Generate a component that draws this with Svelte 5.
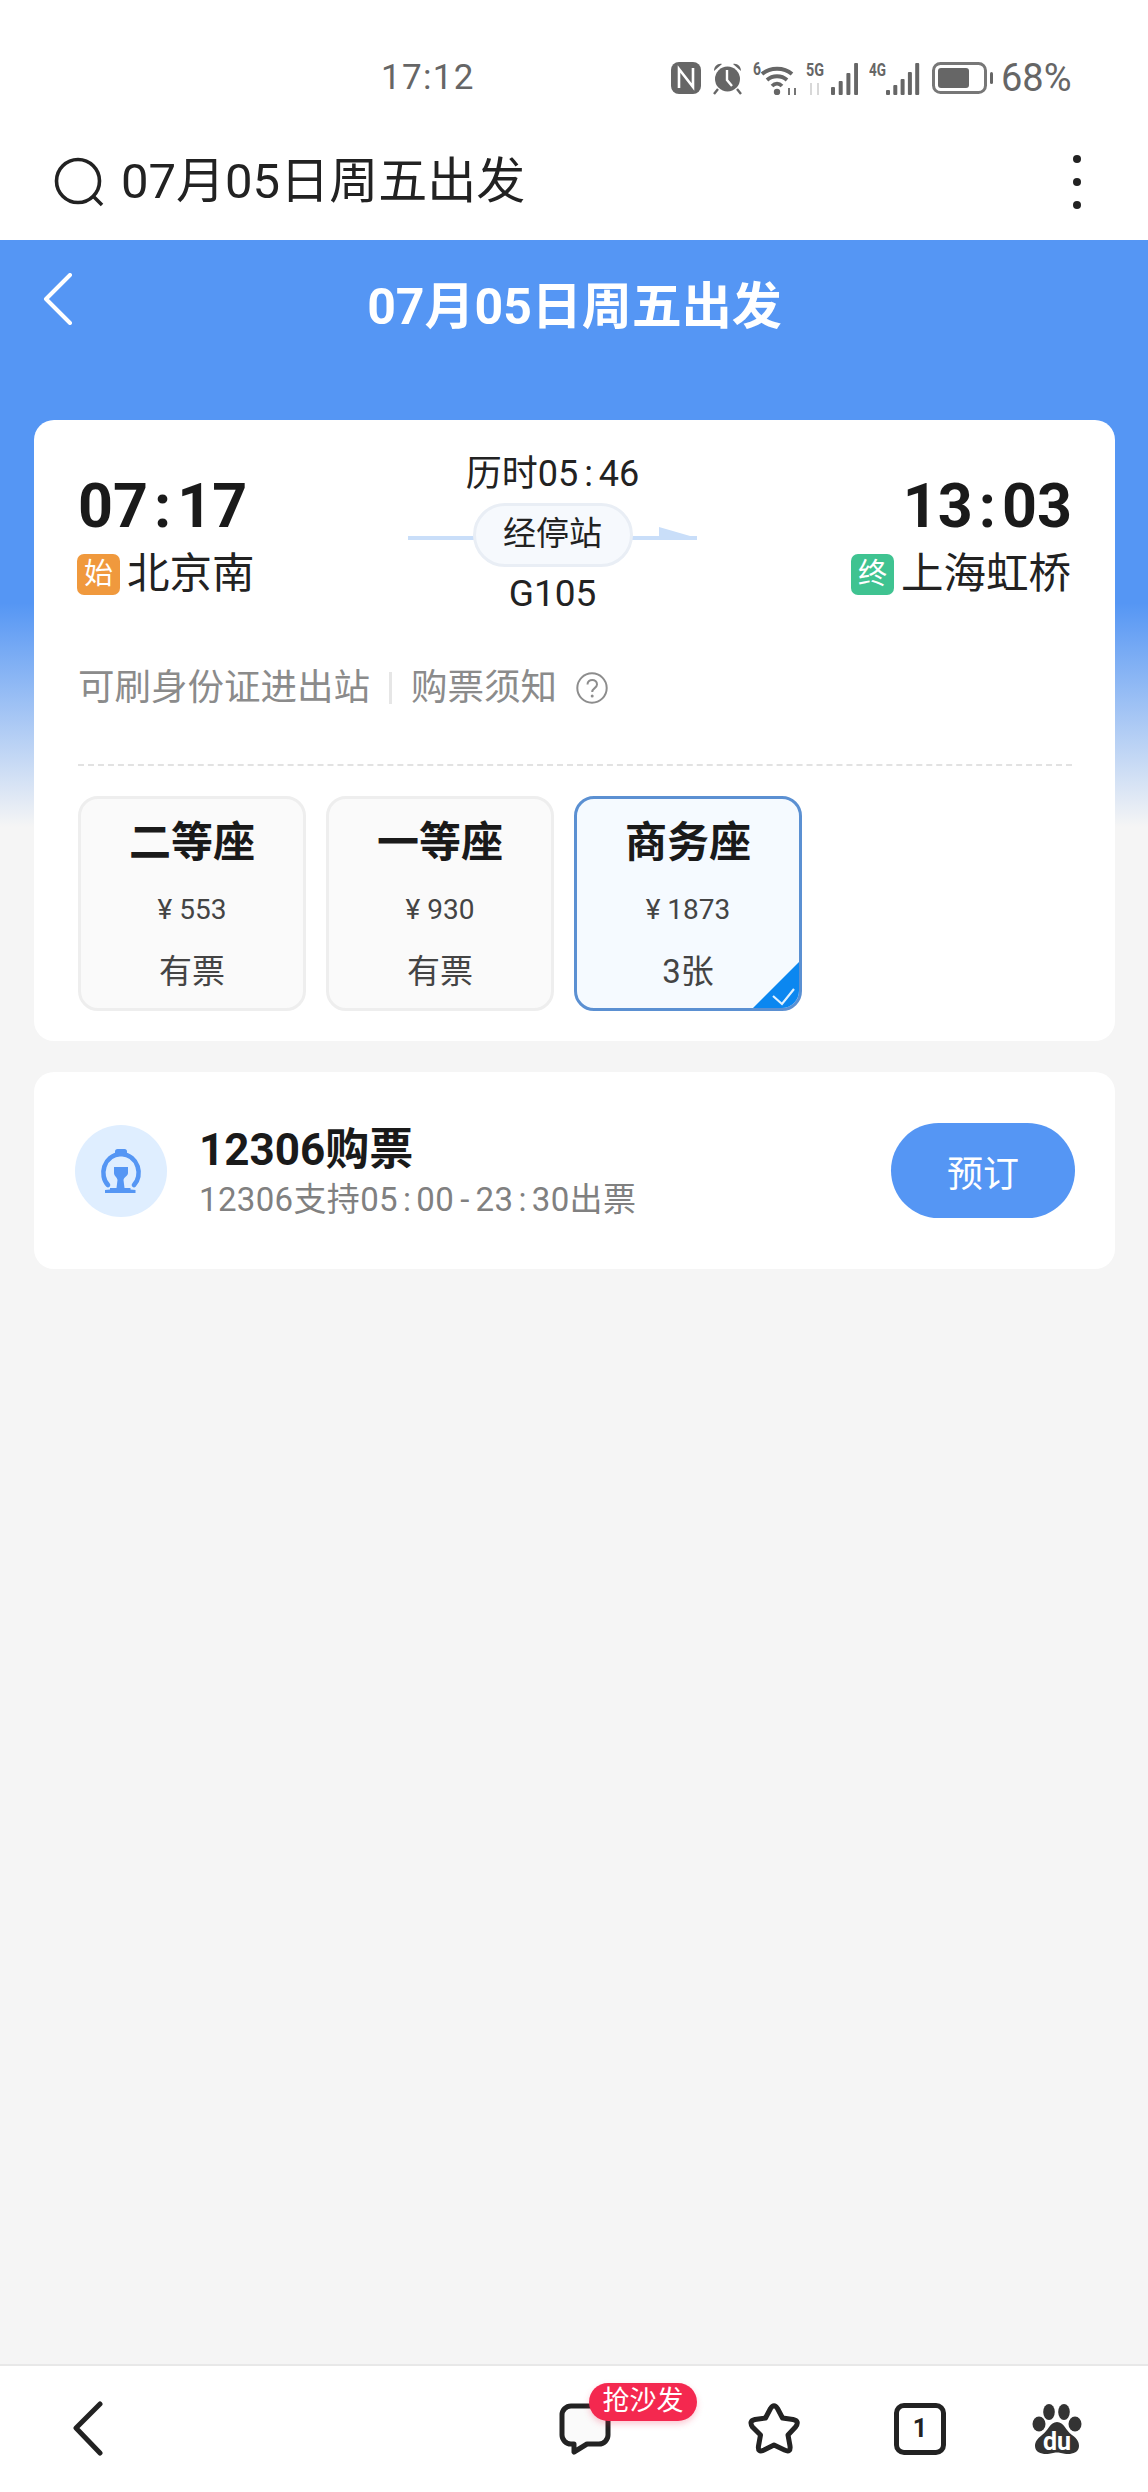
<script>
  // Train ticket detail page inside a phone browser: status bar, search bar,
  // blue header fading into grey, ticket card, booking card and bottom toolbar.
  const seats = [
    { name: '二等座', price: '553', left: '有票' },
    { name: '一等座', price: '930', left: '有票' },
    { name: '商务座', price: '1873', left: '3张', selected: true },
  ];
  const wideBars = [8, 14, 22, 32];
  const narrowBars = [5, 10, 16, 23, 32];
</script>

<div class="page">
  <div class="status">
    <span class="clock">17:12</span>
    <div class="status-icons">
      <svg class="nfc" width="30" height="32" viewBox="0 0 30 32">
        <rect width="30" height="32" rx="8" fill="#666" />
        <path d="M8 26V7l14 18V6" fill="none" stroke="#fff" stroke-width="2.6" />
      </svg>
      <svg class="alarm" width="31" height="33" viewBox="0 0 31 33">
        <circle cx="15.5" cy="17" r="12.5" fill="#666" />
        <path d="M2 9c0-5 4-8 8-7zM29 9c0-5-4-8-8-7z" fill="#666" />
        <path d="M6 27l-4 5M25 27l4 5" stroke="#666" stroke-width="2.4" />
        <path d="M15 8v10l5 6" fill="none" stroke="#fff" stroke-width="2.4" />
      </svg>
      <svg class="wifi labelled" width="45" height="39" viewBox="0 -6 45 39">
        <text x="0" y="13" class="tiny" textLength="8" lengthAdjust="spacingAndGlyphs">6</text>
        <path d="M9 12c8-7 22-7 30 0M14 18c5.500-5 14.500-5 20 0M19 24c3-3 7-3 10 0" fill="none" stroke="#666" stroke-width="3.800" />
        <circle cx="24" cy="30" r="3.200" fill="#666" />
        <path d="M36 26v7M42 26v7" stroke="#666" stroke-width="1.800" />
      </svg>
      <svg class="s5g labelled" width="52" height="39" viewBox="0 -6 52 39">
        <text x="0" y="14" class="tiny" textLength="18" lengthAdjust="spacingAndGlyphs">5G</text>
        <path d="M5 21v12M12 21v12" stroke="#d8d8d8" stroke-width="2" />
        {#each wideBars as h, i}
          <rect x={25 + i * 7.700} y={33 - h} width="4" height={h} rx="1" fill="#666" />
        {/each}
      </svg>
      <svg class="s4g labelled" width="51" height="39" viewBox="0 -6 51 39">
        <text x="0" y="14" class="tiny" textLength="17" lengthAdjust="spacingAndGlyphs">4G</text>
        {#each narrowBars as h, i}
          <rect x={17 + i * 7.300} y={33 - h} width="4" height={h} rx="1" fill="#666" />
        {/each}
      </svg>
      <svg class="battery" width="61" height="32" viewBox="0 0 61 32">
        <rect x="1.500" y="1.500" width="52" height="29" rx="7" fill="none" stroke="#777" stroke-width="3" />
        <rect x="6" y="6" width="31" height="20" rx="3" fill="#666" />
        <rect x="58" y="10" width="3" height="12" rx="1.500" fill="#666" />
      </svg>
      <span class="pct">68%</span>
    </div>
  </div>

  <div class="search">
    <svg width="50" height="50" viewBox="0 0 50 50">
      <circle cx="24" cy="24" r="21.500" fill="none" stroke="#222" stroke-width="3.600" />
      <path d="M39 39l9 9" stroke="#222" stroke-width="3.600" />
    </svg>
    <span class="query">07月05日周五出发</span>
    <div class="dots"><i></i><i></i><i></i></div>
  </div>

  <main>
    <header>
      <svg class="back" width="30" height="52" viewBox="0 0 30 52">
        <path d="M27 2L3 26l24 24" fill="none" stroke="#fff" stroke-width="4" stroke-linecap="round" stroke-linejoin="round" />
      </svg>
      <h1>07月05日周五出发</h1>
    </header>

    <section class="card ticket">
      <div class="route">
        <div class="stop">
          <div class="time">07<span class="colon">:</span>17</div>
          <div class="station">
            <span class="tag start">始</span>北京南
          </div>
        </div>
        <div class="middle">
          <div class="duration">历时05<span class="colon">:</span>46</div>
          <div class="track">
            <span class="pill">经停站</span>
            <svg class="arrow" width="38" height="12" viewBox="0 0 38 12">
              <path d="M0 0l38 11H0z" fill="#c9def9" />
            </svg>
          </div>
          <div class="train">G105</div>
        </div>
        <div class="stop end">
          <div class="time">13<span class="colon">:</span>03</div>
          <div class="station">
            <span class="tag finish">终</span>上海虹桥
          </div>
        </div>
      </div>

      <div class="notice">
        <span>可刷身份证进出站</span>
        <i class="sep"></i>
        <span>购票须知</span>
        <svg width="32" height="32" viewBox="0 0 32 32">
          <circle cx="16" cy="16" r="14.700" fill="none" stroke="#8d8d8d" stroke-width="2" />
          <path d="M11.500 12.500c0-6 9.500-6 9.500 0 0 3.500-4.800 3.800-4.800 7.500" fill="none" stroke="#8d8d8d" stroke-width="2" />
          <circle cx="16.200" cy="24" r="1.500" fill="#8d8d8d" />
        </svg>
      </div>

      <div class="seats">
        {#each seats as seat}
          <div class="seat" class:selected={seat.selected}>
            <div class="seat-name">{seat.name}</div>
            <div class="seat-price">¥ {seat.price}</div>
            <div class="seat-left">{seat.left}</div>
            {#if seat.selected}
              <svg class="corner" width="46" height="46" viewBox="0 0 46 46">
                <path d="M46 0v46H0z" fill="#0b87f0" />
                <path d="M20 34l9 8 12-15" fill="none" stroke="#dff1ff" stroke-width="2.200" />
              </svg>
            {/if}
          </div>
        {/each}
      </div>
    </section>

    <section class="card booking">
      <div class="logo">
        <svg width="42" height="44" viewBox="0 0 42 44">
          <rect x="15" y="0" width="12" height="6" rx="2.500" fill="#5596f4" />
          <path d="M8 36C-1 27 3 6 21 5c18 1 22 22 13 31" fill="none" stroke="#5596f4" stroke-width="4.600" stroke-linecap="round" />
          <path d="M14 18h14v6c0 3-4 4-4.500 7l1 8h6v1.500l5 .5v3H5v-3l5-.5V39h6.500l1-8c-.5-3-3.500-4-3.500-7z" fill="#5596f4" />
        </svg>
      </div>
      <div class="booking-text">
        <div class="booking-title">12306购票</div>
        <div class="booking-sub">12306支持05<span class="colon">:</span>00<span class="dash">-</span>23<span class="colon">:</span>30出票</div>
      </div>
      <button type="button" class="book">预订</button>
    </section>
  </main>

  <nav>
    <svg class="nav-back" width="30" height="56" viewBox="0 0 30 56">
      <path d="M27 3L3 27l24 25" fill="none" stroke="#222" stroke-width="5" stroke-linecap="round" stroke-linejoin="round" />
    </svg>
    <div class="chat">
      <svg width="52" height="52" viewBox="0 0 52 52">
        <path d="M12 3h28a9 9 0 0 1 9 9v20a9 9 0 0 1-9 9H28l-13 8v-8h-3a9 9 0 0 1-9-9V12a9 9 0 0 1 9-9z" fill="#fafafa" stroke="#222" stroke-width="5" stroke-linejoin="round" />
      </svg>
      <span class="sofa">抢沙发</span>
    </div>
    <svg class="star" width="56" height="54" viewBox="0 0 56 54">
      <path d="M24.500 6.500Q28 1 31.500 6.500L36.500 16 47 17.500Q54 19 49.500 25L42 33 44 44Q45 51 38.500 48L28 43 18 48Q11.500 51 12.500 44L14.500 33 6.500 25Q2.500 19 9 17.500L19.500 16Z" fill="none" stroke="#222" stroke-width="5" stroke-linejoin="round" />
    </svg>
    <div class="tabs">1</div>
    <svg class="paw" width="50" height="58" viewBox="0 0 50 58">
      <g fill="#333">
        <ellipse cx="7" cy="20" rx="6.500" ry="7.500" />
        <ellipse cx="17" cy="8" rx="5.800" ry="8" />
        <ellipse cx="32" cy="8" rx="5.800" ry="8" />
        <ellipse cx="43" cy="20" rx="6.500" ry="7.500" />
        <path d="M25 18C32 18 34 27 40 31 46 35 47 39 47 42 47 48 41 50 36 50 31 50 29 48.500 25 48.500 21 48.500 19 50 14 50 9 50 3 48 3 42 3 38 5 35 10 31 16 27 18 18 25 18Z" />
      </g>
      <text x="25" y="46" class="du">du</text>
    </svg>
  </nav>
</div>

<style>
  :global(body) {
    margin: 0;
    background: #f5f5f5;
  }

  .page {
    width: 1148px;
    height: 2492px;
    display: flex;
    flex-direction: column;
    background: #fff;
    font-family: Roboto, "Noto Sans CJK SC", sans-serif;
    color: #222;
    overflow: hidden;
  }

  /* status bar */
  .status {
    height: 130px;
    display: flex;
    align-items: center;
    padding: 26px 0 0 381px;
    box-sizing: border-box;
    color: #666;
  }
  .clock {
    width: 92px;
    font-size: 35px;
    letter-spacing: 1.300px;
    line-height: 44px;
    white-space: nowrap;
  }
  .status-icons {
    display: flex;
    align-items: center;
    margin-left: 198px;
  }
  /* extra room above the small network labels, taken back with a margin */
  .labelled { margin-top: -6px; }
  .alarm { margin-left: 11px; }
  .wifi { margin-left: 10px; }
  .tiny {
    font-size: 18px;
    font-weight: 700;
    fill: #666;
    font-family: Roboto, sans-serif;
  }
  .s5g { margin-left: 8px; }
  .s4g { margin-left: 11px; }
  .battery { margin-left: 12px; }
  .pct {
    font-size: 38px;
    line-height: 40px;
    margin-left: 8px;
  }

  /* browser search bar */
  .search {
    height: 110px;
    display: flex;
    align-items: center;
    padding: 0 0 7px 54px;
    box-sizing: border-box;
  }
  .query {
    font-size: 49px;
    margin-left: 17px;
    line-height: 60px;
    color: #222;
  }
  .dots {
    margin-left: auto;
    margin-right: 67px;
    display: flex;
    flex-direction: column;
    gap: 15px;
  }
  .dots i {
    width: 8px;
    height: 8px;
    border-radius: 50%;
    background: #222;
    display: block;
  }

  /* page body with the fading blue backdrop */
  main {
    flex: 1;
    padding: 0 33px 0 34px;
    background: linear-gradient(#5596f4 363px, #f5f5f5 587px);
  }
  header {
    height: 180px;
    display: grid;
    grid-template-columns: 1fr auto 1fr;
    align-items: start;
  }
  .back {
    margin: 33px 0 0 9px;
  }
  h1 {
    grid-column: 2;
    margin: 37px 0 0;
    font-size: 50px;
    font-weight: 700;
    line-height: 60px;
    color: #fff;
    white-space: nowrap;
  }

  .card {
    background: #fff;
    border-radius: 20px;
  }
  .ticket {
    padding: 32px 43px 30px 44px;
  }
  .route {
    display: grid;
    grid-template-columns: 330px 289px 1fr;
  }
  .stop {
    padding-top: 22px;
  }
  .time {
    font-size: 61px;
    font-weight: 700;
    line-height: 64px;
    color: #1a1a1a;
  }
  .time .colon {
    margin: 0 6px;
  }
  .station {
    display: flex;
    align-items: center;
    margin-top: 15px;
    font-size: 42.500px;
    line-height: 42px;
    color: #222;
  }
  .end {
    text-align: right;
  }
  .end .station {
    justify-content: flex-end;
    padding-right: 1px;
  }
  .tag {
    width: 43px;
    height: 41px;
    border-radius: 7px;
    margin: 0 7px 0 -1px;
    color: #fff;
    font-size: 29px;
    line-height: 41px;
    text-align: center;
    opacity: 0.95;
  }
  .start { background: #f09433; }
  .finish { background: #35c08c; }
  .middle {
    display: flex;
    flex-direction: column;
    align-items: stretch;
    text-align: center;
  }
  .duration {
    font-size: 36px;
    line-height: 44px;
    color: #222;
  }
  .duration .colon {
    margin: 0 6px;
  }
  .track {
    position: relative;
    height: 64px;
    margin-top: 7px;
    display: flex;
    justify-content: center;
    background: linear-gradient(#c9def9, #c9def9) center 33px / 100% 4px no-repeat;
  }
  .pill {
    width: 160px;
    height: 64px;
    box-sizing: border-box;
    border: 3px solid #e9eef5;
    border-radius: 32px;
    background: #f6f9fd;
    font-size: 33px;
    line-height: 56px;
    color: #222;
  }
  .arrow {
    position: absolute;
    right: 0;
    top: 24px;
  }
  .train {
    font-size: 37px;
    line-height: 44px;
    margin-top: 5px;
    color: #222;
  }

  .notice {
    display: flex;
    align-items: center;
    margin-top: 50px;
    padding-bottom: 54px;
    border-bottom: 2px dashed #e2e2e2;
    font-size: 36.500px;
    line-height: 44px;
    color: #8b8b8b;
  }
  .sep {
    width: 3px;
    height: 32px;
    margin: 0 19px 0 19px;
    background: #e6e6e6;
  }
  .notice svg {
    margin-left: 19px;
  }

  .seats {
    display: flex;
    gap: 20px;
    margin-top: 30px;
  }
  .seat {
    position: relative;
    width: 228px;
    height: 215px;
    box-sizing: border-box;
    padding-top: 22px;
    border: 3px solid #eeeeee;
    border-radius: 20px;
    background: #fafafa;
    text-align: center;
    overflow: hidden;
  }
  .selected {
    border-color: #5b90d2;
    background: #f5faff;
  }
  .seat-name {
    font-size: 42px;
    font-weight: 700;
    line-height: 44px;
    color: #1a1a1a;
  }
  .seat-price {
    margin-top: 27px;
    font-size: 28px;
    line-height: 36px;
    color: #444;
  }
  .seat-left {
    margin-top: 22px;
    font-size: 33px;
    line-height: 44px;
    color: #444;
  }
  .corner {
    position: absolute;
    right: 0;
    bottom: 0;
  }

  .booking {
    height: 197px;
    margin-top: 31px;
    display: flex;
    align-items: center;
    padding: 0 40px 0 41px;
    box-sizing: border-box;
  }
  .logo {
    width: 92px;
    height: 92px;
    border-radius: 50%;
    background: #dfeeff;
    display: flex;
    align-items: center;
    justify-content: center;
    flex: none;
  }
  .booking-text {
    margin-left: 32px;
    padding-top: 6px;
  }
  .booking-title {
    font-size: 44px;
    font-weight: 700;
    line-height: 46px;
    color: #1a1a1a;
  }
  .booking-sub {
    margin-top: 6px;
    font-size: 33px;
    line-height: 42px;
    letter-spacing: 0.350px;
    color: #808080;
  }
  .booking-sub .colon {
    margin: 0 5px;
  }
  .booking-sub .dash {
    margin: 0 6px;
  }
  .book {
    margin-left: auto;
    width: 184px;
    height: 95px;
    border: none;
    border-radius: 48px;
    background: #5596f4;
    color: #fff;
    font-family: inherit;
    font-size: 36px;
    padding: 0;
  }

  /* bottom toolbar */
  nav {
    height: 128px;
    box-sizing: border-box;
    border-top: 2px solid #e8e8e8;
    display: flex;
    align-items: center;
    padding-left: 73px;
    background: #fff;
  }
  .chat {
    position: relative;
    margin-left: 456px;
    height: 52px;
  }
  .sofa {
    position: absolute;
    left: 30px;
    top: -20px;
    width: 108px;
    height: 38px;
    border-radius: 19px;
    background: #f4284f;
    box-shadow: 0 3px 6px rgba(244, 40, 79, 0.25);
    color: #fff;
    font-size: 27px;
    line-height: 37px;
    text-align: center;
  }
  .star {
    margin-left: 135px;
  }
  .tabs {
    width: 52px;
    height: 52px;
    box-sizing: border-box;
    margin-left: 92px;
    border: 5px solid #222;
    border-radius: 10px;
    text-align: center;
    font-size: 25px;
    font-weight: 700;
    line-height: 42px;
    color: #222;
  }
  .paw {
    margin: 0 0 -8px 86px;
  }
  .du {
    font-size: 25px;
    font-weight: 700;
    fill: #fff;
    text-anchor: middle;
    font-family: Roboto, sans-serif;
  }
</style>
